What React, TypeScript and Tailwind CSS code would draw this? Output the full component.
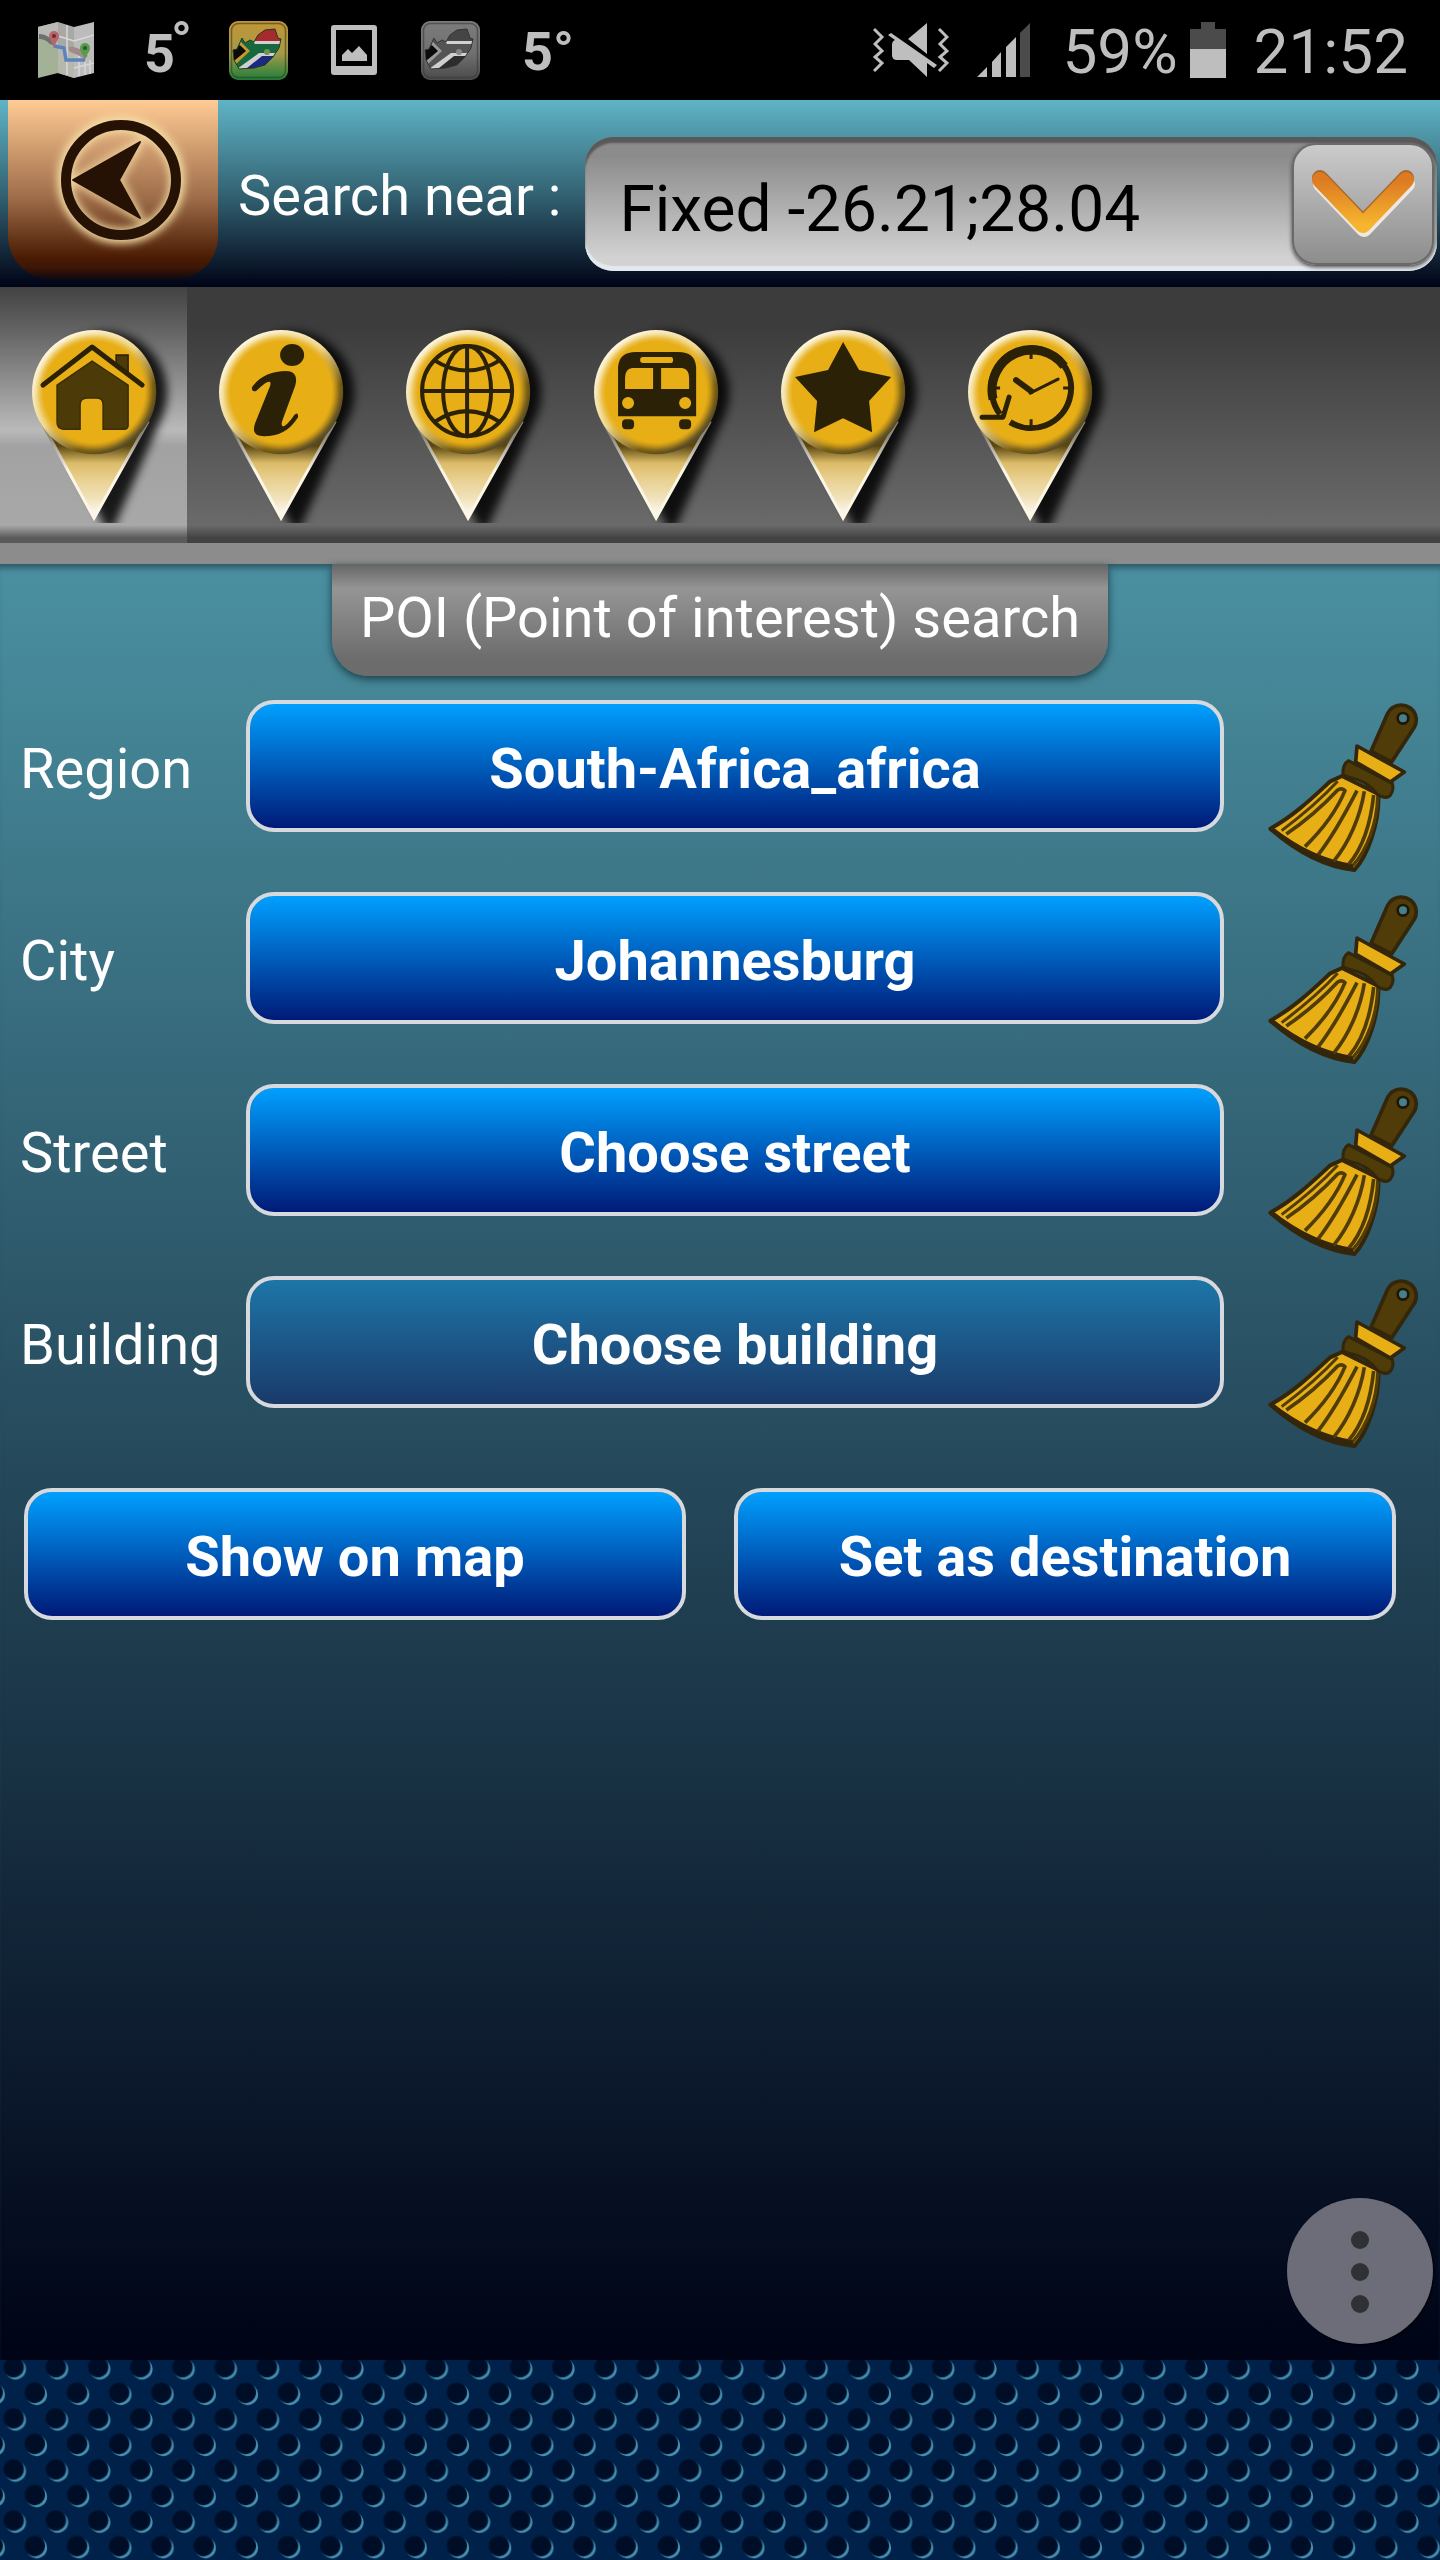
import React, { useState } from "react";

const FIELDS = [
  { id: "region", label: "Region", value: "South-Africa_africa", disabled: false },
  { id: "city", label: "City", value: "Johannesburg", disabled: false },
  { id: "street", label: "Street", value: "Choose street", disabled: false },
  { id: "building", label: "Building", value: "Choose building", disabled: true },
];

const INK = "#2b2107";
const YELLOW = "#e7ae15";

/* ---------- status bar icons ---------- */

function MapIcon() {
  return (
    <svg width="56" height="56" viewBox="0 0 56 56" aria-hidden="true">
      <path d="M0 5 20 0V51L0 56Z" fill="#a3b296" />
      <path d="M0 5 20 0V24L0 16Z" fill="#b9b9b5" />
      <path d="M20 0 36 5V56L20 51Z" fill="#a8a9a5" />
      <path d="M36 5 56 0V51L36 56Z" fill="#bcbcbc" />
      <path d="M20 26 36 30V56L20 51Z" fill="#b6b8ae" />
      <path d="M1 12C8 12 14 16 18 24L12 22C8 18 4 17 1 17Z" fill="#6f6f6f" />
      <path d="M31 25C38 24 44 28 50 34L46 37C40 32 35 32 31 29Z" fill="#a08a8a" />
      <path d="M20 14 36 19 56 13M29 3V53M41 34V54M47 40V53M52 38V52M36 46 56 41" stroke="#d8d8d8" strokeWidth="1.5" fill="none" />
      <path d="M16 24 26 26 28 38 47 38" stroke="#5c83bd" strokeWidth="3.5" fill="none" />
      <path d="M16 27C15 20 11 18 11 14A5 5 0 0 1 21 14C21 18 17 20 16 27Z" fill="#b8656a" />
      <path d="M47 39C46 32 42 30 42 26A5 5 0 0 1 52 26C52 30 48 32 47 39Z" fill="#579c4c" />
      <circle cx="16" cy="14" r="2" fill="#6b2a30" />
      <circle cx="47" cy="26" r="2" fill="#285a22" />
    </svg>
  );
}

function SouthAfricaIcon({ id, gray = false }: { id: string; gray?: boolean }) {
  return (
    <svg width="59" height="59" viewBox="0 0 59 59" aria-hidden="true" className={gray ? "grayscale" : ""}>
      <defs>
        <linearGradient id={`${id}-bg`} x1="0" y1="0" x2="0" y2="1">
          <stop offset="0" stopColor={gray ? "#7c7c7c" : "#c39536"} />
          <stop offset="0.55" stopColor={gray ? "#707070" : "#a59b48"} />
          <stop offset="1" stopColor={gray ? "#4a4a4a" : "#1d7d3a"} />
        </linearGradient>
        <clipPath id={`${id}-land`}>
          <path d="M4 29 8 28 13 17 16 22 21 19 25 21 29 14 36 9 46 8 49 17 52 18 50 27 44 36 36 44 25 47 10 48 5 39Z" />
        </clipPath>
      </defs>
      <rect width="59" height="59" rx="9" fill={`url(#${id}-bg)`} />
      <rect x="2.5" y="2.5" width="54" height="54" rx="7" fill="none" stroke="#3a3a20" strokeOpacity="0.6" strokeWidth="1.5" />
      <g clipPath={`url(#${id}-land)`}>
        <rect width="59" height="59" fill="#17683f" />
        <path d="M26 0H59V21H26Z" fill="#a72a2c" />
        <path d="M24 20H54V23H26Z" fill="#d0d0d0" />
        <path d="M12 50 34 34H54V56H12Z" fill="#1b2a80" />
        <path d="M8 48 30 32H54V35H33L13 51Z" fill="#d0d0d0" />
        <path d="M0 22 12 25 18 30 5 40Z" fill="#0b0b0b" />
        <path d="M11 20 21 30 7 43 5 40 17 30 10 23Z" fill="#c9962f" />
        <circle cx="38" cy="31" r="3" fill="#71944a" />
      </g>
      <path d="M4 29 8 28 13 17 16 22 21 19 25 21 29 14 36 9 46 8 49 17 52 18 50 27 44 36 36 44 25 47 10 48 5 39Z" fill="none" stroke="#2c3a1c" strokeWidth="1" />
    </svg>
  );
}

function PictureIcon() {
  return (
    <svg width="46" height="50" viewBox="0 0 46 50" aria-hidden="true">
      <path fillRule="evenodd" fill="#bebebe" d="M3 0H43A3 3 0 0 1 46 3V47A3 3 0 0 1 43 50H3A3 3 0 0 1 0 47V3A3 3 0 0 1 3 0ZM5 5V41H41V5Z" />
      <path fill="#bebebe" d="M11 36V30L17 24 21 28 28 21 36 30V36Z" />
    </svg>
  );
}

function MuteIcon() {
  return (
    <svg width="76" height="54" viewBox="0 0 76 54" aria-hidden="true" fill="#bebebe">
      <path d="M1 6 9 14 2 21 9 28 2 34 9 40 1 48M66 6 74 14 67 21 74 28 67 34 74 40 66 48" fill="none" stroke="#bebebe" strokeWidth="3" />
      <path d="M35 16 54 0V31Z" />
      <path d="M18 10 64 42 61 45 54 40V54L36 37H24Q19 37 19 32V22Q19 18 22 17L15 12Z" />
    </svg>
  );
}

function SignalIcon() {
  return (
    <svg width="53" height="54" viewBox="0 0 53 54" aria-hidden="true">
      <path fill="#bebebe" d="M0 54 10 44V54ZM15 54V39L24 29V54ZM29 54V24L39 14V54Z" />
      <path fill="#4b4b4b" d="M43 54V10L53 0V54Z" />
    </svg>
  );
}

function BatteryIcon() {
  return (
    <svg width="36" height="56" viewBox="0 0 36 56" aria-hidden="true">
      <path fill="#4b4b4b" d="M11 0H25V7H36V27H0V7H11Z" />
      <path fill="#bebebe" d="M0 27H36V56H0Z" />
    </svg>
  );
}

/* ---------- category glyphs, drawn on the pin ---------- */

function HomeGlyph() {
  return (
    <g>
      <path d="M116 68H128V88L116 79Z" fill="#4c3b08" stroke={INK} strokeWidth="1.5" />
      <path d="M43 98 92 60 142 98" fill="none" stroke={INK} strokeWidth="5" strokeLinecap="round" strokeLinejoin="round" />
      <path d="M57 98 92 74 128 98V138Q128 142 124 142H103V118Q103 111 97 111H87Q80 111 80 118V142H63Q57 141 57 135Z" fill="#4c3b08" stroke="#3b2d06" strokeWidth="1.5" />
    </g>
  );
}

function InfoGlyph() {
  return (
    <g fill={INK}>
      <ellipse cx="105" cy="68" rx="12" ry="11" />
      <path d="M65 100C72 90 84 84 99 84C107 84 111 89 108 99L95 134C93 142 98 141 107 128Q111 124 111 130C102 144 91 149 77 149C68 149 65 145 68 136L83 99C85 92 80 93 69 104Q64 105 65 100Z" />
    </g>
  );
}

function GlobeGlyph() {
  return (
    <g fill="none" stroke={INK} strokeWidth="4">
      <circle cx="93" cy="104" r="45" />
      <ellipse cx="93" cy="104" rx="24" ry="45" />
      <path d="M93 59V149M48 104H138M60 73Q93 94 126 73M60 135Q93 113 126 135" />
    </g>
  );
}

function BusGlyph() {
  return (
    <g fill={INK}>
      <path fillRule="evenodd" d="M56 129V80Q57 65 74 65H116Q133 65 134 80V129ZM81 70Q78 70 78 73T81 76H109Q111 76 111 73T109 70ZM70 81Q63 82 63 91V102H91V81ZM99 81V102H127V91Q127 82 120 81ZM66 110A6 6 0 1 0 66 122A6 6 0 1 0 66 110ZM123 110A6 6 0 1 0 123 122A6 6 0 1 0 123 110Z" />
      <rect x="60" y="132" width="12" height="10" rx="4" />
      <rect x="117" y="132" width="12" height="10" rx="4" />
    </g>
  );
}

function StarGlyph() {
  return <path fill={INK} d="M94 55 110 83 142 90 120 114 123 145 94 131 65 145 68 114 46 90 79 83Z" />;
}

function HistoryGlyph() {
  return (
    <g fill="none" stroke={INK}>
      <path d="M74 135A40 40 0 1 0 56 110" strokeWidth="6" />
      <path d="M57 112A40 40 0 0 1 128 79" strokeWidth="9" />
      <path d="M56 108Q58 120 64 127" strokeWidth="6" />
      <path d="M73 110 67 130H46" strokeWidth="5" strokeLinecap="round" strokeLinejoin="round" />
      <path d="M80 93 95 104" strokeWidth="6" strokeLinecap="round" />
      <path d="M94 106 122 92" strokeWidth="3" strokeLinecap="round" />
      <path d="M95 62V72M95 132V140M58 101H64M127 101H133" strokeWidth="3" />
    </g>
  );
}

const TABS = [
  { name: "Home", Glyph: HomeGlyph },
  { name: "Information", Glyph: InfoGlyph },
  { name: "World", Glyph: GlobeGlyph },
  { name: "Transport", Glyph: BusGlyph },
  { name: "Favourites", Glyph: StarGlyph },
  { name: "History", Glyph: HistoryGlyph },
];

// gradients and filters shared by all the pins
function PinDefs() {
  return (
    <svg width="0" height="0" className="absolute" aria-hidden="true">
      <defs>
        <linearGradient id="pin-rim" x1="0.15" y1="0.1" x2="0.85" y2="0.9">
          <stop offset="0" stopColor="#fffdf2" />
          <stop offset="0.45" stopColor="#f0dca0" />
          <stop offset="0.75" stopColor="#6b5314" />
          <stop offset="1" stopColor="#4a4430" />
        </linearGradient>
        <linearGradient id="pin-tail" x1="0" y1="0" x2="0" y2="1">
          <stop offset="0.24" stopColor="#5a4610" />
          <stop offset="0.42" stopColor="#dcbc68" />
          <stop offset="0.6" stopColor="#ead193" />
          <stop offset="0.8" stopColor="#f1e3bd" />
          <stop offset="1" stopColor="#ffffff" />
        </linearGradient>
        <linearGradient id="pin-edge" x1="0" y1="0" x2="0" y2="1">
          <stop offset="0.15" stopColor="#8d8879" />
          <stop offset="0.5" stopColor="#fbf6e6" />
        </linearGradient>
        <filter id="pin-soft" x="-20%" y="-20%" width="140%" height="140%">
          <feGaussianBlur stdDeviation="3" />
        </filter>
        <filter id="pin-shadow" x="-30%" y="-30%" width="160%" height="160%">
          <feGaussianBlur stdDeviation="5" />
        </filter>
      </defs>
    </svg>
  );
}

function Pin({ children }: { children: React.ReactNode }) {
  return (
    <svg viewBox="0 0 187 236" className="block w-full" aria-hidden="true">
      <path d="M44 130A61 61 0 1 1 150 130L104 236H97Z" transform="translate(9 6)" fill="#000" opacity="0.85" filter="url(#pin-shadow)" />
      <path d="M42 136 94 231 147 136Z" fill="url(#pin-tail)" stroke="url(#pin-edge)" strokeWidth="3" />
      <circle cx="94" cy="105" r="62" fill="url(#pin-rim)" />
      <circle cx="94" cy="105" r="56" fill={YELLOW} filter="url(#pin-soft)" />
      <circle cx="94" cy="105" r="51" fill={YELLOW} />
      {children}
    </svg>
  );
}

function BroomIcon() {
  return (
    <svg width="153" height="173" viewBox="200 60 459 519" aria-hidden="true" strokeLinejoin="round">
      <path d="M512 214 562 100C575 74 606 68 630 84C651 100 651 126 642 142L574 246Z" fill="#4f3c08" stroke="#33260a" strokeWidth="11" />
      <circle cx="608" cy="115" r="16" fill="#46808f" stroke="#1f1703" strokeWidth="8" />
      <path d="M425 288 390 304C345 345 285 405 210 446C285 512 370 560 462 570C500 530 538 430 534 342Z" fill={YELLOW} stroke="#33260a" strokeWidth="12" />
      <path d="M212 446Q330 540 460 560" stroke="#33260a" strokeWidth="14" fill="none" />
      <path d="M412 304C360 360 300 410 244 452" stroke="#4f3c08" strokeWidth="9" fill="none" />
      <path d="M258 462C320 420 370 375 412 330Q426 322 434 332C410 390 370 445 314 500M470 332C435 400 400 465 354 524M492 334C480 410 445 490 400 544M520 345C512 420 490 500 446 552" fill="none" stroke="#4f3c08" strokeWidth="11" />
      <path d="M532 350C530 430 500 510 458 556" fill="none" stroke="#4f3c08" strokeWidth="10" />
      <path d="M444 242Q426 254 428 284L446 292Q500 302 530 342Q556 360 570 346Q582 330 576 310Z" fill="#4f3c08" stroke="#33260a" strokeWidth="9" />
      <path d="M470 198 612 276 570 306 466 246Z" fill={YELLOW} stroke="#33260a" strokeWidth="11" />
    </svg>
  );
}

/* ---------- page sections ---------- */

function StatusBar() {
  return (
    <div className="flex h-[100px] items-center justify-between bg-black pl-[18px] pr-8 text-[#bebebe]">
      <div className="flex items-center text-[54px] leading-[60px] font-bold">
        <div className="flex w-24 justify-center"><MapIcon /></div>
        <div className="flex w-24 justify-center pt-2 pl-3">
          5<span className="-mt-3 -ml-1">°</span>
        </div>
        <div className="flex w-24 justify-center"><SouthAfricaIcon id="za" /></div>
        <div className="flex w-24 justify-center"><PictureIcon /></div>
        <div className="flex w-24 justify-center"><SouthAfricaIcon id="za-gray" gray /></div>
        <div className="flex w-24 justify-center pt-1 pl-1">5°</div>
      </div>
      <div className="flex items-center text-[62px] leading-[64px]">
        <MuteIcon />
        <div className="ml-7"><SignalIcon /></div>
        <span className="ml-8 pt-1">59%</span>
        <div className="ml-3"><BatteryIcon /></div>
        <span className="ml-7 pt-1">21:52</span>
      </div>
    </div>
  );
}

function SearchHeader() {
  return (
    <header className="flex h-[187px] items-center bg-linear-to-b/srgb from-[#5fb4c6] via-[#336373] via-50% to-[#000316]">
      <button
        type="button"
        aria-label="Back"
        className="ml-2 flex h-[180px] w-[210px] shrink-0 self-start rounded-b-[44px] bg-[linear-gradient(#ffcb94,#9d6b48_55%,#4a1b02_88%,#3c1605_93%,#0d0710)]"
      >
        <svg viewBox="0 0 210 180" className="w-full" aria-hidden="true">
          <defs>
            <filter id="glow" x="-30%" y="-30%" width="160%" height="160%">
              <feGaussianBlur stdDeviation="4" />
            </filter>
          </defs>
          <g fill="none" stroke="#f6dfa6" filter="url(#glow)">
            <circle cx="113" cy="80" r="56" strokeWidth="15" />
            <path d="M65 80 132 42 111 80 132 118Z" strokeWidth="6" />
          </g>
          <circle cx="113" cy="80" r="55" fill="none" stroke="#261105" strokeWidth="10" />
          <path d="M65 80 132 42 111 80 132 118Z" fill="#261105" stroke="#261105" strokeWidth="2" strokeLinejoin="round" />
        </svg>
      </button>
      <label htmlFor="near" className="ml-5 shrink-0 pt-1 text-[56px] leading-[64px] text-white">
        Search near :
      </label>
      <div className="relative mr-[3px] mb-4 ml-6 h-[134px] flex-1 self-end">
        <select
          id="near"
          className="h-full w-full appearance-none rounded-[28px] bg-linear-to-b/srgb from-[#8c8c8c] from-15% to-[#d2d2d2] to-90% pt-3 pr-40 pl-[34px] text-[64px] text-black shadow-[inset_0_6px_2px_#595959,inset_0_-5px_1px_#e4e9ee]"
        >
          <option>Fixed -26.21;28.04</option>
        </select>
        <div className="pointer-events-none absolute top-1.5 right-[3px] flex h-[122px] w-[142px] items-center justify-center rounded-[24px] border-2 border-[#6a6a6a] bg-linear-to-b/srgb from-[#cbcbcb] to-[#8d8d8d] shadow-[0_2px_4px_#444]">
          <svg width="110" height="80" viewBox="0 0 110 80" fill="none" strokeWidth="16" strokeLinecap="round" strokeLinejoin="round" aria-hidden="true">
            <defs>
              <linearGradient id="chevron" x1="0" y1="0" x2="0" y2="1">
                <stop offset="0" stopColor="#dd7a22" />
                <stop offset="1" stopColor="#f6b52e" />
              </linearGradient>
            </defs>
            <path d="M13 20 56 65 99 20" stroke="#eee8e2" />
            <path d="M12 14 55 59 98 14" stroke="#a5682c" />
            <path d="M12 16 55 61 98 16" stroke="url(#chevron)" />
          </svg>
        </div>
      </div>
    </header>
  );
}

function CategoryTabs() {
  const [active, setActive] = useState("Home");

  return (
    <nav className="flex border-b-[21px] border-[#8c8c8c] bg-[linear-gradient(#3c3c3c_15%,#6a6a6a_93%,#434343_98%)]">
      <PinDefs />
      {TABS.map(({ name, Glyph }) => (
        <button
          key={name}
          type="button"
          aria-label={name}
          aria-pressed={active === name}
          onClick={() => setActive(name)}
          className={
            active === name
              ? "w-[13%] bg-[linear-gradient(#424242,#6a6a6a_20%,#bababa_56%,#a2a2a2_62%,#a8a8a8_93%,#5a5a5a_98%)] pb-5"
              : "w-[13%] pb-5"
          }
        >
          <Pin>
            <Glyph />
          </Pin>
        </button>
      ))}
    </nav>
  );
}

const buttonClass =
  "h-[132px] rounded-[28px] border-4 border-[#d6d9de] bg-clip-padding bg-linear-to-b/srgb pt-1.5 text-[56px] leading-[64px] font-bold text-white";

export default function App() {
  return (
    <div className="flex min-h-screen flex-col font-['Roboto','Noto_Sans',sans-serif]">
      <StatusBar />
      <SearchHeader />
      <CategoryTabs />

      <main className="relative flex flex-1 flex-col bg-linear-to-b/srgb from-[#4a90a1] to-[#000316] shadow-[inset_0_8px_6px_-4px_#2f5865]">
        <h1 className="flex h-28 items-center self-center rounded-b-[36px] bg-[linear-gradient(#656565,#959595_22%,#6c6c6c_85%)] px-7 pb-1 text-[56px] leading-[64px] text-white shadow-[0_3px_8px_#1c3c46]">
          POI (Point of interest) search
        </h1>

        <div className="mt-6 flex flex-col gap-[19px] pr-5 pl-5">
          {FIELDS.map((field) => (
            <div key={field.id} className="flex items-start">
              <label
                htmlFor={field.id}
                className="flex h-[132px] w-[226px] shrink-0 items-center pt-1.5 text-[56px] leading-[64px] text-white"
              >
                {field.label}
              </label>
              <button
                id={field.id}
                type="button"
                disabled={field.disabled}
                className={`${buttonClass} flex-1 ${
                  field.disabled ? "from-[#1d76a8] to-[#1a3a6a]" : "from-[#00a0ff] to-[#001a78]"
                }`}
              >
                {field.value}
              </button>
              <button type="button" aria-label={`Clear ${field.label}`} className="ml-[43px] shrink-0">
                <BroomIcon />
              </button>
            </div>
          ))}
        </div>

        <div className="mt-[39px] grid grid-cols-2 gap-12 pr-11 pl-6">
          <button type="button" className={`${buttonClass} from-[#00a0ff] to-[#001a78]`}>
            Show on map
          </button>
          <button type="button" className={`${buttonClass} from-[#00a0ff] to-[#001a78]`}>
            Set as destination
          </button>
        </div>

        <button
          type="button"
          aria-label="More options"
          className="absolute right-[7px] bottom-4 flex size-[146px] flex-col items-center justify-center gap-3.5 rounded-full bg-[#6c6d79] pt-0.5 shadow-[1px_1px_2px_#000]"
        >
          <span className="size-[18px] rounded-full bg-[#2d3236]" />
          <span className="size-[18px] rounded-full bg-[#2d3236]" />
          <span className="size-[18px] rounded-full bg-[#2d3236]" />
        </button>
      </main>

      <footer className="h-[200px] bg-[#00214a]">
        <svg width="100%" height="100%" className="block" aria-hidden="true">
          <defs>
            <pattern id="mesh" width="42.2" height="51.1" patternUnits="userSpaceOnUse" patternTransform="translate(-6 -17)">
              <g id="hole">
                <circle cx="21.5" cy="26" r="10.5" fill="#4690ae" />
                <circle cx="19.5" cy="24" r="10.5" fill="#00183a" />
                <circle cx="19.5" cy="24" r="9.5" fill="#000d26" />
              </g>
              <use href="#hole" x="21.1" y="25.5" />
              <use href="#hole" x="-21.1" y="25.5" />
              <use href="#hole" x="21.1" y="-25.5" />
              <use href="#hole" x="-21.1" y="-25.5" />
            </pattern>
          </defs>
          <rect width="100%" height="100%" fill="url(#mesh)" />
        </svg>
      </footer>
    </div>
  );
}
